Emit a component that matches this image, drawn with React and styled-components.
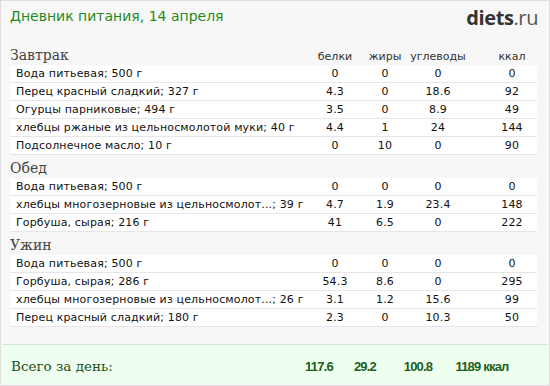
import styled, { createGlobalStyle } from "styled-components";

const GlobalStyle = createGlobalStyle`
  html, body {
    margin: 0;
    padding: 0;
    background: #ffffff;
  }
`;

const Frame = styled.div`
  box-sizing: border-box;
  width: 550px;
  height: 386px;
  border: 1px solid #dedede;
  background: #f7f7f7;
  display: flex;
  flex-direction: column;
  font-family: "DejaVu Sans", Verdana, sans-serif;
`;

const Header = styled.header`
  height: 41px;
  display: flex;
  justify-content: space-between;
  align-items: flex-start;
  padding: 0 11px 0 9px;
`;

const Title = styled.h1`
  margin: 7px 0 0;
  font-weight: normal;
  font-size: 14px;
  color: #1f8a1f;
`;

const Logo = styled.div`
  margin-top: 3px;
  font-family: "Open Sans", "DejaVu Sans", sans-serif;
  font-size: 20px;
  color: #555;
  letter-spacing: -0.4px;

  b {
    color: #333;
    font-weight: 700;
  }
`;

const Body = styled.main`
  flex: 1;
  padding: 0 12px 0 9px;
`;

const Grid = styled.div`
  display: grid;
  grid-template-columns: minmax(0, 1fr) 50px 50px 56px 71px;
  align-items: center;
`;

const SectionHead = styled(Grid)`
  height: 23px;
  align-items: end;
`;

const SectionTitle = styled.h2`
  margin: 0;
  font-family: "DejaVu Serif", Georgia, serif;
  font-weight: normal;
  font-size: 14px;
  line-height: 19px;
  color: #444;
`;

const Label = styled.span`
  text-align: center;
  font-size: 11px;
  line-height: 17px;
  color: #333;
  padding-left: ${(p) => (p.$last ? "21px" : "0")};
`;

const Row = styled(Grid)`
  height: 17px;
  background: #fff;
  border-bottom: 1px solid #e6e6e6;
  font-size: 11px;
  letter-spacing: 0.15px;
  color: #111;
`;

const Name = styled.span`
  padding-left: 6px;
  white-space: nowrap;
  overflow: hidden;
`;

const Num = styled.span`
  text-align: center;
  padding-left: ${(p) => (p.$last ? "21px" : "0")};
`;

const Footer = styled.footer`
  height: 40px;
  box-sizing: border-box;
  margin: 0 1px 1px;
  border-top: 1px solid #d6e6d6;
  background: #efffef;
  display: grid;
  grid-template-columns: minmax(0, 1fr) 46px 46px 60px 68px;
  align-items: center;
  padding: 3px 32px 0 9px;
`;

const Total = styled.span`
  font-family: "DejaVu Serif", Georgia, serif;
  font-size: 13.5px;
  color: #1d4d1d;
`;

const TotalNum = styled.span`
  text-align: center;
  font-family: "Liberation Sans", Arial, sans-serif;
  font-weight: bold;
  font-size: 13px;
  letter-spacing: -0.8px;
  color: #1c601c;
  white-space: nowrap;
`;

const meals = [
  {
    title: "Завтрак",
    items: [
      ["Вода питьевая; 500 г", "0", "0", "0", "0"],
      ["Перец красный сладкий; 327 г", "4.3", "0", "18.6", "92"],
      ["Огурцы парниковые; 494 г", "3.5", "0", "8.9", "49"],
      ["хлебцы ржаные из цельносмолотой муки; 40 г", "4.4", "1", "24", "144"],
      ["Подсолнечное масло; 10 г", "0", "10", "0", "90"],
    ],
  },
  {
    title: "Обед",
    items: [
      ["Вода питьевая; 500 г", "0", "0", "0", "0"],
      ["хлебцы многозерновые из цельносмолот...; 39 г", "4.7", "1.9", "23.4", "148"],
      ["Горбуша, сырая; 216 г", "41", "6.5", "0", "222"],
    ],
  },
  {
    title: "Ужин",
    items: [
      ["Вода питьевая; 500 г", "0", "0", "0", "0"],
      ["Горбуша, сырая; 286 г", "54.3", "8.6", "0", "295"],
      ["хлебцы многозерновые из цельносмолот...; 26 г", "3.1", "1.2", "15.6", "99"],
      ["Перец красный сладкий; 180 г", "2.3", "0", "10.3", "50"],
    ],
  },
];

const labels = ["белки", "жиры", "углеводы", "ккал"];

export default function App() {
  return (
    <>
      <GlobalStyle />
      <Frame>
        <Header>
          <Title>Дневник питания, 14 апреля</Title>
          <Logo>
            <b>diets</b>.ru
          </Logo>
        </Header>
        <Body>
          {meals.map((meal, mi) => (
            <section key={meal.title}>
              <SectionHead>
                <SectionTitle>{meal.title}</SectionTitle>
                {mi === 0 &&
                  labels.map((l, i) => (
                    <Label key={l} $last={i === 3}>
                      {l}
                    </Label>
                  ))}
              </SectionHead>
              {meal.items.map((it, ri) => (
                <Row key={ri}>
                  <Name>{it[0]}</Name>
                  {it.slice(1).map((v, vi) => (
                    <Num key={vi} $last={vi === 3}>
                      {v}
                    </Num>
                  ))}
                </Row>
              ))}
            </section>
          ))}
        </Body>
        <Footer>
          <Total>Всего за день:</Total>
          <TotalNum>117.6</TotalNum>
          <TotalNum>29.2</TotalNum>
          <TotalNum>100.8</TotalNum>
          <TotalNum>1189 ккал</TotalNum>
        </Footer>
      </Frame>
    </>
  );
}
